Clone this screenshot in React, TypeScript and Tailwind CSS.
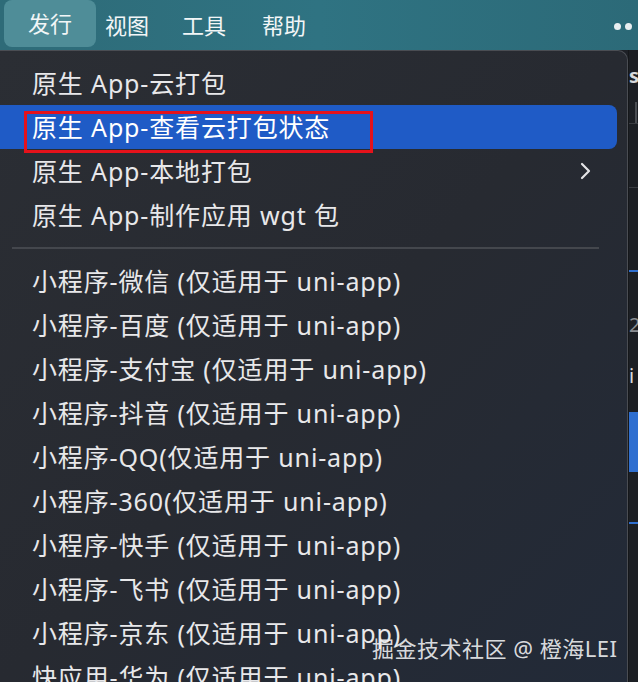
const topMenus = ['发行', '视图', '工具', '帮助'];

const appItems = [
  { label: '原生 App-云打包' },
  { label: '原生 App-查看云打包状态', active: true },
  { label: '原生 App-本地打包', submenu: true },
  { label: '原生 App-制作应用 wgt 包' },
];

const miniItems = [
  '小程序-微信 (仅适用于 uni-app)',
  '小程序-百度 (仅适用于 uni-app)',
  '小程序-支付宝 (仅适用于 uni-app)',
  '小程序-抖音 (仅适用于 uni-app)',
  '小程序-QQ(仅适用于 uni-app)',
  '小程序-360(仅适用于 uni-app)',
  '小程序-快手 (仅适用于 uni-app)',
  '小程序-飞书 (仅适用于 uni-app)',
  '小程序-京东 (仅适用于 uni-app)',
  '快应用-华为 (仅适用于 uni-app)',
];

function Chevron() {
  return (
    <svg width="14" height="20" viewBox="0 0 14 20" fill="none">
      <path d="M3 3l7 7-7 7" stroke="#e4e4e6" strokeWidth="2.2" strokeLinecap="round" strokeLinejoin="round" />
    </svg>
  );
}

export default function App() {
  return (
    <div
      className="relative w-[638px] h-[682px] overflow-hidden bg-[#1d2026] flex flex-col"
      style={{ fontFamily: '"Noto Sans", "Noto Sans CJK SC", sans-serif' }}
    >
      {/* Top menu bar */}
      <div className="h-[50px] shrink-0 flex items-center pl-[4px] pr-[6px] bg-gradient-to-r from-[#2e6b78] via-[#2f7382] to-[#2c6a78] text-[22px] text-[#f2f6f7]">
        <div className="h-[47px] -mt-[3px] w-[92px] flex items-center justify-center rounded-[8px] bg-[#4f8d98]">
          {topMenus[0]}
        </div>
        <div className="ml-[9px]">{topMenus[1]}</div>
        <div className="ml-[33px]">{topMenus[2]}</div>
        <div className="ml-[36px]">{topMenus[3]}</div>
        <div className="ml-auto flex gap-[4px] pt-[2px]">
          <span className="w-[7px] h-[7px] rounded-full bg-[#e8eef0]" />
          <span className="w-[7px] h-[7px] rounded-full bg-[#e8eef0]" />
        </div>
      </div>

      <div className="flex flex-1 min-h-0">
        {/* Dropdown menu */}
        <div className="w-[628px] shrink-0 rounded-tr-[10px] border-t border-r border-[#4a4d53] bg-gradient-to-br from-[#2b2e34] via-[#272a31] to-[#222a38] pt-[10px] text-[#e8e8ea] text-[25px] leading-[44px] tracking-[0.85px]">
          {appItems.map((it) => (
            <div
              key={it.label}
              className={
                it.active
                  ? 'relative h-[44px] mr-[10px] rounded-r-[8px] bg-[#1f5bc6] flex items-center pl-[32px] text-white'
                  : 'relative h-[44px] mr-[10px] flex items-center pl-[32px] pr-[24px]'
              }
            >
              <span>{it.label}</span>
              {it.active && (
                <span className="absolute left-[24px] top-[6px] w-[349px] h-[42px] border-[3px] border-[#e5121b]" />
              )}
              {it.submenu && (
                <span className="ml-auto">
                  <Chevron />
                </span>
              )}
            </div>
          ))}
          <div className="h-[22px] flex items-center px-[12px] pr-[28px]">
            <div className="h-[2px] w-full bg-[#44474d]" />
          </div>
          {miniItems.map((m) => (
            <div key={m} className="h-[44px] flex items-center pl-[32px] whitespace-nowrap">
              {m}
            </div>
          ))}
        </div>

        {/* Window behind, right edge */}
        <div className="flex-1 flex flex-col bg-[#1c1f24] border-l border-[#15171a] overflow-hidden text-[#d8dadd] text-[20px]">
          <div className="h-[52px] flex items-center font-bold">s</div>
          <div className="h-[22px] border-b border-[#3a3d42] flex">
            <span className="ml-[6px] w-[2px] bg-[#4a4d52]" />
          </div>
          <div className="h-[64px] border-b border-[#3a3d42]" />
          <div className="h-[82px]" />
          <div className="h-[2px] bg-[#2f6fd0]" />
          <div className="h-[68px] flex items-end text-[#8a8d92]">2</div>
          <div className="h-[72px] flex items-center">i</div>
          <div className="h-[60px] bg-[#2f6fd0]" />
          <div className="h-[50px]" />
          <div className="h-[2px] bg-[#2f6fd0]" />
        </div>
      </div>

      {/* Watermark */}
      <div className="absolute left-[372px] top-[633px] text-[22px] leading-[30px] tracking-[0.5px] text-[#f1f2f4]/90 whitespace-nowrap">
        掘金技术社区 @ 橙海LEI
      </div>
    </div>
  );
}
